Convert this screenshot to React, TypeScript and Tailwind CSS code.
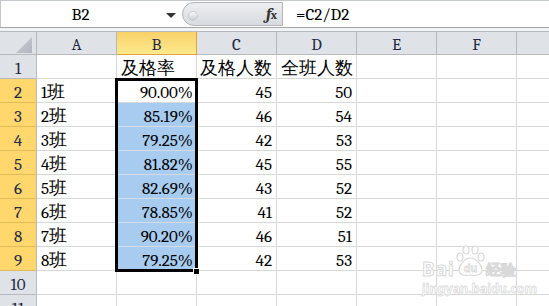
import React from "react";

type Row = { n: number; a: string; b: string; c: string; d: string };

const rows: Row[] = [
  { n: 1, a: "", b: "及格率", c: "及格人数", d: "全班人数" },
  { n: 2, a: "1班", b: "90.00%", c: "45", d: "50" },
  { n: 3, a: "2班", b: "85.19%", c: "46", d: "54" },
  { n: 4, a: "3班", b: "79.25%", c: "42", d: "53" },
  { n: 5, a: "4班", b: "81.82%", c: "45", d: "55" },
  { n: 6, a: "5班", b: "82.69%", c: "43", d: "52" },
  { n: 7, a: "6班", b: "78.85%", c: "41", d: "52" },
  { n: 8, a: "7班", b: "90.20%", c: "46", d: "51" },
  { n: 9, a: "8班", b: "79.25%", c: "42", d: "53" },
  { n: 10, a: "", b: "", c: "", d: "" },
  { n: 11, a: "", b: "", c: "", d: "" },
];

function Cjk({ children }: { children: React.ReactNode }) {
  return <span className="text-[17.5px]">{children}</span>;
}

function ClassName({ text }: { text: string }) {
  if (!text) return null;
  return (
    <span>
      {text.slice(0, 1)}
      <Cjk>{text.slice(1)}</Cjk>
    </span>
  );
}

export default function App() {
  const cols = ["A", "B", "C", "D", "E", "F"];
  return (
    <div className="relative w-[549px] h-[306px] overflow-hidden bg-white font-serif [font-family:Liberation_Serif,Noto_Sans_CJK_SC,serif] text-[17px] leading-[19px] text-black">
      {/* Formula bar */}
      <div className="flex h-[28px] border-b border-[#a3a7ac] border-t border-t-[#c4c7cb]">
        <div className="flex w-[182px] shrink-0 items-center border-l border-[#c4c7cb]">
          <div className="w-[159px] text-center pt-[1px]">B2</div>
          <svg width="10" height="5" viewBox="0 0 10 5" className="ml-[6px] mt-[2px]">
            <polygon points="0,0 10,0 5,5" fill="#333" />
          </svg>
        </div>
        <div className="relative flex w-[101px] shrink-0 items-center justify-end rounded-l-full border border-r border-[#b1b5ba] bg-gradient-to-b from-[#eceef1] to-[#d8dbdf] my-[1px] pr-[6px]">
          <div className="absolute left-[5px] top-[8px] h-[10px] w-[10px] rounded-full bg-gradient-to-b from-[#fbfbfc] to-[#c9cdd2] border border-[#c8ccd1]" />
          <span className="italic font-bold text-[17px] text-[#333] tracking-[-1px]">
            f<span className="text-[12px] not-italic font-bold">x</span>
          </span>
        </div>
        <div className="flex flex-1 items-center pl-[13px] pt-[1px]">=C2/D2</div>
      </div>
      {/* strip */}
      <div className="h-[3px] bg-[#f2f3f5]" />
      {/* Column header */}
      <div className="flex h-[24px] border-t border-[#b5b9be]">
        <div className="relative w-[37px] shrink-0 border-r border-b border-[#b5b9be] bg-[#dfe2e6]">
          <svg width="16" height="16" viewBox="0 0 16 16" className="absolute left-[16px] top-[5px]">
            <defs>
              <linearGradient id="tri" x1="0" y1="0" x2="1" y2="1">
                <stop offset="0" stopColor="#c9ccd1" />
                <stop offset="1" stopColor="#b3b7bd" />
              </linearGradient>
            </defs>
            <polygon points="16,0 16,16 0,16" fill="url(#tri)" />
          </svg>
        </div>
        {cols.map((c) =>
          c === "B" ? (
            <div
              key={c}
              className="flex w-[80px] shrink-0 items-end justify-center border-r border-b border-[#e2a13c] bg-gradient-to-b from-[#f9d16a] to-[#fde98c] text-[#1e2b45]"
            >
              {c}
            </div>
          ) : (
            <div
              key={c}
              className="flex w-[80px] shrink-0 items-end justify-center border-r border-b border-[#b5b9be] bg-[#dfe2e6] text-[#1e2b45]"
            >
              {c}
            </div>
          )
        )}
        <div className="flex-1 border-b border-[#b5b9be] bg-[#dfe2e6]" />
      </div>
      {/* Rows */}
      {rows.map((r) => {
        const sel = r.n >= 2 && r.n <= 9;
        const blue = r.n >= 3 && r.n <= 9;
        const isHead = r.n === 1;
        return (
          <div key={r.n} className="flex h-[24px]">
            <div
              className={
                sel
                  ? "flex w-[37px] shrink-0 items-end justify-center border-r border-b border-r-[#b5b9be] border-b-[#e0bb5c] bg-[#ffd76c] text-[#1e2b45]"
                  : "flex w-[37px] shrink-0 items-end justify-center border-r border-b border-[#b5b9be] bg-[#dfe2e6] text-[#1e2b45]"
              }
            >
              {r.n}
            </div>
            <div className="flex w-[80px] shrink-0 items-end border-r border-b border-[#d8d8d8] pl-[4px]">
              <ClassName text={r.a} />
            </div>
            <div
              className={
                isHead
                  ? "flex w-[80px] shrink-0 items-end border-r border-b border-[#d8d8d8] pl-[4px]"
                  : blue
                  ? "flex w-[80px] shrink-0 items-end justify-end border-r border-b border-[#d3dbe6] bg-[#a8cbf0] pr-[3px]"
                  : "flex w-[80px] shrink-0 items-end justify-end border-r border-b border-[#d8d8d8] pr-[3px]"
              }
            >
              {isHead ? <Cjk>{r.b}</Cjk> : r.b}
            </div>
            <div
              className={
                isHead
                  ? "flex w-[80px] shrink-0 items-end border-r border-b border-[#d8d8d8] pl-[3px]"
                  : "flex w-[80px] shrink-0 items-end justify-end border-r border-b border-[#d8d8d8] pr-[4px]"
              }
            >
              {isHead ? <Cjk>{r.c}</Cjk> : r.c}
            </div>
            <div
              className={
                isHead
                  ? "flex w-[80px] shrink-0 items-end border-r border-b border-[#d8d8d8] pl-[4px]"
                  : "flex w-[80px] shrink-0 items-end justify-end border-r border-b border-[#d8d8d8] pr-[4px]"
              }
            >
              {isHead ? <Cjk>{r.d}</Cjk> : r.d}
            </div>
            <div className="w-[80px] shrink-0 border-r border-b border-[#d8d8d8]" />
            <div className="w-[80px] shrink-0 border-r border-b border-[#d8d8d8]" />
            <div className="flex-1 border-b border-[#d8d8d8]" />
          </div>
        );
      })}

      {/* Selection border */}
      <div className="absolute left-[115px] top-[78px] h-[194px] w-[83px] border-[3px] border-black" />
      <div className="absolute left-[193px] top-[268px] h-[7px] w-[7px] border border-white bg-black" />

      {/* Watermark */}
      <div className="pointer-events-none absolute left-[420px] top-[244px] h-[60px] w-[110px] text-white font-sans [font-family:Liberation_Sans,Noto_Sans_CJK_SC,sans-serif]">
        <div className="absolute left-[2px] top-[16px] text-[19px] font-bold leading-[19px] tracking-[1px] [-webkit-text-stroke:1px_#d9d9d9]">
          Bai
        </div>
        <svg width="34" height="34" viewBox="0 0 34 34" className="absolute left-[34px] top-[1px]">
          <g fill="white" stroke="#d9d9d9" strokeWidth="1.2">
            <ellipse cx="6" cy="12" rx="3" ry="4" />
            <ellipse cx="12" cy="5" rx="3" ry="4" />
            <ellipse cx="21" cy="5" rx="3" ry="4" />
            <ellipse cx="27" cy="12" rx="3" ry="4" />
            <path d="M16.5 13 C 11 13, 5 20, 5 25 C 5 30, 10 31, 16.5 30 C 23 31, 28 30, 28 25 C 28 20, 22 13, 16.5 13 Z" />
          </g>
          <text x="16.5" y="27" textAnchor="middle" fontFamily="Liberation Sans, sans-serif" fontWeight="bold" fontSize="11" fill="white" stroke="#d9d9d9" strokeWidth="0.8">
            du
          </text>
        </svg>
        <div className="absolute left-[66px] top-[17px] text-[15px] font-bold leading-[17px] [-webkit-text-stroke:1px_#d9d9d9]">
          经验
        </div>
        <div className="absolute left-[2px] top-[38px] text-[12.5px] font-bold leading-[14px] [-webkit-text-stroke:0.8px_#dcdcdc]">
          jingyan.baidu.com
        </div>
      </div>
    </div>
  );
}
